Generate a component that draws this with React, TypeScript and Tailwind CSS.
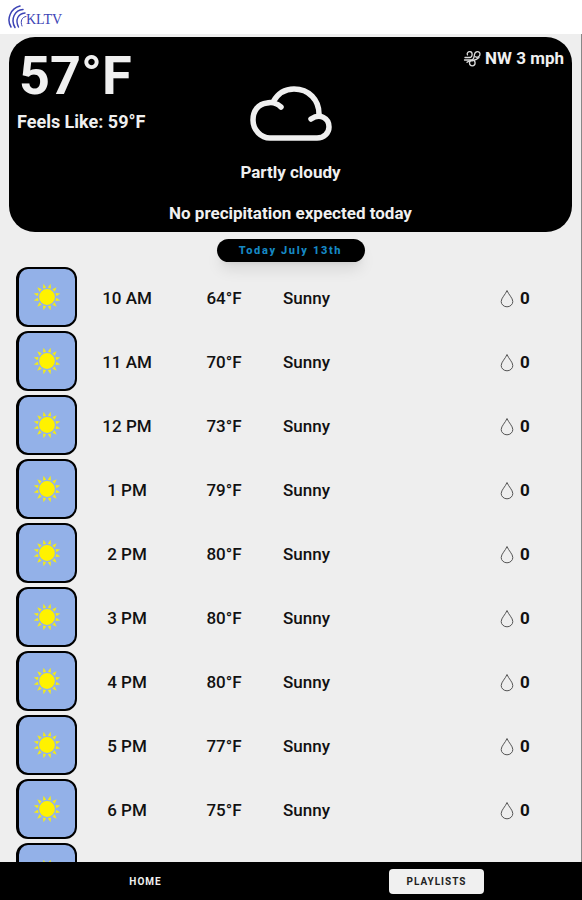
import React from "react"

interface HourForecast {
  hour: string
  temp: number
  condition: string
  rain: number
}

const forecast: HourForecast[] = [
  { hour: "10 AM", temp: 64, condition: "Sunny", rain: 0 },
  { hour: "11 AM", temp: 70, condition: "Sunny", rain: 0 },
  { hour: "12 PM", temp: 73, condition: "Sunny", rain: 0 },
  { hour: "1 PM", temp: 79, condition: "Sunny", rain: 0 },
  { hour: "2 PM", temp: 80, condition: "Sunny", rain: 0 },
  { hour: "3 PM", temp: 80, condition: "Sunny", rain: 0 },
  { hour: "4 PM", temp: 80, condition: "Sunny", rain: 0 },
  { hour: "5 PM", temp: 77, condition: "Sunny", rain: 0 },
  { hour: "6 PM", temp: 75, condition: "Sunny", rain: 0 },
  { hour: "7 PM", temp: 73, condition: "Sunny", rain: 0 },
]

const rays = [15, 45, 75, 105, 135, 165, 195, 225, 255, 285, 315, 345]

function Logo() {
  return (
    <div className="flex items-center text-[#3b42b5]">
      <svg viewBox="0 0 20 24" className="h-6 w-5" fill="none" stroke="currentColor" strokeLinecap="round" aria-hidden="true">
        <path d="M12 1C3 3 -2 14 3 22" strokeWidth="1.5" />
        <path d="M15 4.500C7 5 2 14 7 22.500" strokeWidth="1.5" />
        <path d="M17 8C10 8.500 7 15 10.500 22" strokeWidth="1.4" />
        <path d="M18 11.500C14 12 12 16 14 21" strokeWidth="1" />
      </svg>
      <span className="-ml-0.5 mt-1.5 font-['Liberation_Serif',serif] text-sm leading-4">KLTV</span>
    </div>
  )
}

function WindIcon() {
  return (
    <svg viewBox="0 0 18 18" className="h-[18px] w-[18px]" fill="none" stroke="#dcdcdc" strokeWidth="1.3" strokeLinecap="round" strokeLinejoin="round" aria-hidden="true">
      <path d="M2 8.500h4.500c3.200 0 3.600-5.500 0.500-5.800-2-.200-3.500 1.600-2.500 3.200" />
      <path d="M1.500 11h6.500c3.200 0 3-3 3.500-5.500 0.500-3.800 5.500-3.800 5.500-0.500 0 2.500-2.500 4-4.500 2.800" />
      <path d="M4 13.200c1.500-1.500 4-1.200 6-1.700 2.500-.500 4.500-1.500 6-3" />
      <circle cx="9.300" cy="14" r="2.800" />
    </svg>
  )
}

function CloudIcon() {
  return (
    <svg viewBox="0 0 82 56" className="h-14 w-[82px]" fill="none" stroke="#f0f0f0" strokeWidth="5.500" strokeLinecap="round" strokeLinejoin="round" aria-hidden="true">
      <path d="M31 21C27 17 21 16 17 17C8 18 3 25 3 34C3 44 11 52 20 52H67C74 52 79 47 79 41C79 32 70 27 61 33" />
      <path d="M23 16C28 7 36 3 44 3C59 3 69 14 69 28" />
    </svg>
  )
}

function SunIcon() {
  return (
    <svg viewBox="0 0 28 28" className="h-7 w-7" fill="#fff200" aria-hidden="true">
      <circle cx="14" cy="14" r="7.900" />
      {rays.map((angle) => (
        <path key={angle} d="M14 0.300L15.600 4.800h-3.200z" opacity="0.900" transform={`rotate(${angle} 14 14)`} />
      ))}
    </svg>
  )
}

function DropIcon() {
  return (
    <svg viewBox="0 0 14 18" className="h-[18px] w-3.5" fill="none" stroke="#555" strokeWidth="1" aria-hidden="true">
      <path d="M7 0.500C5.500 4.500 1.200 8 1.200 11.500a5.800 5.300 0 0 0 11.600 0C12.800 8 8.500 4.500 7 0.500z" />
    </svg>
  )
}

function CurrentWeather() {
  return (
    <section className="mx-[9px] mt-[3px] rounded-[26px] bg-black px-2 pb-[7px] text-[17px] leading-6 font-bold text-[#f0f0f0]">
      <div className="flex h-[49px] items-start justify-between">
        <h1 className="pt-[11px] pl-0.5 text-[54px] leading-14">57°F</h1>
        <p className="flex items-center gap-1 pt-[9px]">
          <WindIcon />
          NW 3 mph
        </p>
      </div>
      <p className="pt-6 text-lg leading-6">Feels Like: 59°F</p>
      <div className="-mt-12 flex flex-col items-center">
        <CloudIcon />
        <p className="mt-[18px]">Partly cloudy</p>
        <p className="mt-[17px]">No precipitation expected today</p>
      </div>
    </section>
  )
}

function HourlyTable() {
  return (
    <table className="mt-[3px] w-full table-fixed text-[17px] font-medium text-[#111]">
      <colgroup>
        <col className="w-[77px]" />
        <col className="w-[100px]" />
        <col className="w-[94px]" />
        <col />
        <col className="w-[81px]" />
      </colgroup>
      <tbody>
        {forecast.map((item) => (
          <tr key={item.hour} className="h-16">
            <td className="p-0 pl-4">
              <div className="flex h-15 items-center justify-center rounded-xl border-2 border-l-3 border-black bg-[#93b1e8]">
                <SunIcon />
              </div>
            </td>
            <td className="p-0 pt-1 text-center">{item.hour}</td>
            <td className="p-0 pt-1 text-center">{item.temp}°F</td>
            <td className="p-0 pt-1 pl-3">{item.condition}</td>
            <td className="p-0 pt-1">
              <span className="flex items-center gap-1.5 font-bold">
                <DropIcon />
                {item.rain}
              </span>
            </td>
          </tr>
        ))}
      </tbody>
    </table>
  )
}

export default function App() {
  return (
    <div className="flex h-screen flex-col bg-[#eee] font-[Roboto,sans-serif]">
      <header className="flex h-[34px] shrink-0 items-center bg-white px-2">
        <Logo />
      </header>

      <main className="min-h-0 flex-1 overflow-y-auto border-r border-[#888] [scrollbar-width:none]">
        <CurrentWeather />
        <h2 className="mx-auto mt-[7px] w-37 rounded-full bg-black text-center text-[11px] leading-[23px] font-extrabold tracking-[0.15em] text-[#1689c4] shadow-lg">
          Today July 13th
        </h2>
        <HourlyTable />
      </main>

      <nav className="grid h-[38px] shrink-0 grid-cols-2 items-center justify-items-center bg-black text-[10px] font-bold tracking-widest">
        <button type="button" className="h-6 px-4 text-[#f0f0f0]">HOME</button>
        <button type="button" className="h-[25px] w-[95px] rounded-sm bg-[#f0f0f0] text-[#222]">PLAYLISTS</button>
      </nav>
    </div>
  )
}
